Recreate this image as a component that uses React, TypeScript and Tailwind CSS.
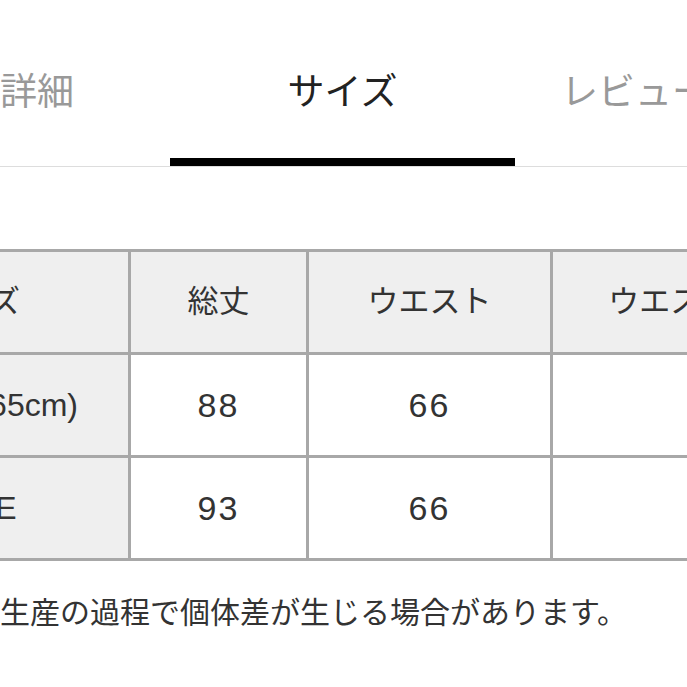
const font = '[font-family:"Liberation_Sans","Noto_Sans_CJK_JP",sans-serif]'

const rows = [
  { label: 'M(身長165cm)', values: ['88', '66', '68'] },
  { label: 'FREE', values: ['93', '66', '70'] },
]

export default function App() {
  return (
    <div className={`h-[687px] w-[687px] overflow-hidden bg-white ${font}`}>
      {/* tabs */}
      <div className="flex border-b border-[#dddddd] pt-[72px]">
        <div className="flex w-[170px] shrink-0 flex-col">
          <span className="h-[41px] text-[37px] leading-[41px] text-[#999999]">詳細</span>
          <div className="mt-[45px] h-2" />
        </div>
        <div className="flex w-[345px] shrink-0 flex-col items-center">
          <span className="h-[41px] text-[37px] leading-[41px] text-[#222222]">サイズ</span>
          <div className="mt-[45px] h-2 w-full bg-black" />
        </div>
        <div className="flex shrink-0 flex-col pl-[46px]">
          <span className="h-[41px] whitespace-nowrap text-[37px] leading-[41px] text-[#999999]">レビュー</span>
          <div className="mt-[45px] h-2" />
        </div>
      </div>

      {/* size table */}
      <div className="mt-[82px] ml-[-183px] w-[1100px]">
        <table className="w-[1053px] max-w-none table-fixed border-collapse text-[#333333]">
          <colgroup>
            <col className="w-[311px]" />
            <col className="w-[178px]" />
            <col className="w-[244px]" />
            <col className="w-[320px]" />
          </colgroup>
          <thead>
            <tr className="h-[103px] bg-[#efefef]">
              <th className="border-[3px] border-[#a8a8a8] text-[31px] font-normal">サイズ</th>
              <th className="border-[3px] border-[#a8a8a8] text-[31px] font-normal">総丈</th>
              <th className="border-[3px] border-[#a8a8a8] text-[31px] font-normal">ウエスト</th>
              <th className="whitespace-nowrap border-[3px] border-[#a8a8a8] text-[31px] font-normal">ウエスト(最大)</th>
            </tr>
          </thead>
          <tbody>
            {rows.map((row) => (
              <tr key={row.label} className="h-[103px]">
                <td className="whitespace-nowrap border-[3px] border-[#a8a8a8] bg-[#efefef] text-center text-[32px]">
                  {row.label}
                </td>
                {row.values.map((v, i) => (
                  <td key={i} className="border-[3px] border-[#a8a8a8] text-center text-[34px] tracking-[2px]">
                    {v}
                  </td>
                ))}
              </tr>
            ))}
          </tbody>
        </table>
      </div>

      <p className="mt-[30px] ml-[-30px] whitespace-nowrap text-[30px] leading-[43px] text-[#333333]">
        ※生産の過程で個体差が生じる場合があります。
      </p>
    </div>
  )
}
